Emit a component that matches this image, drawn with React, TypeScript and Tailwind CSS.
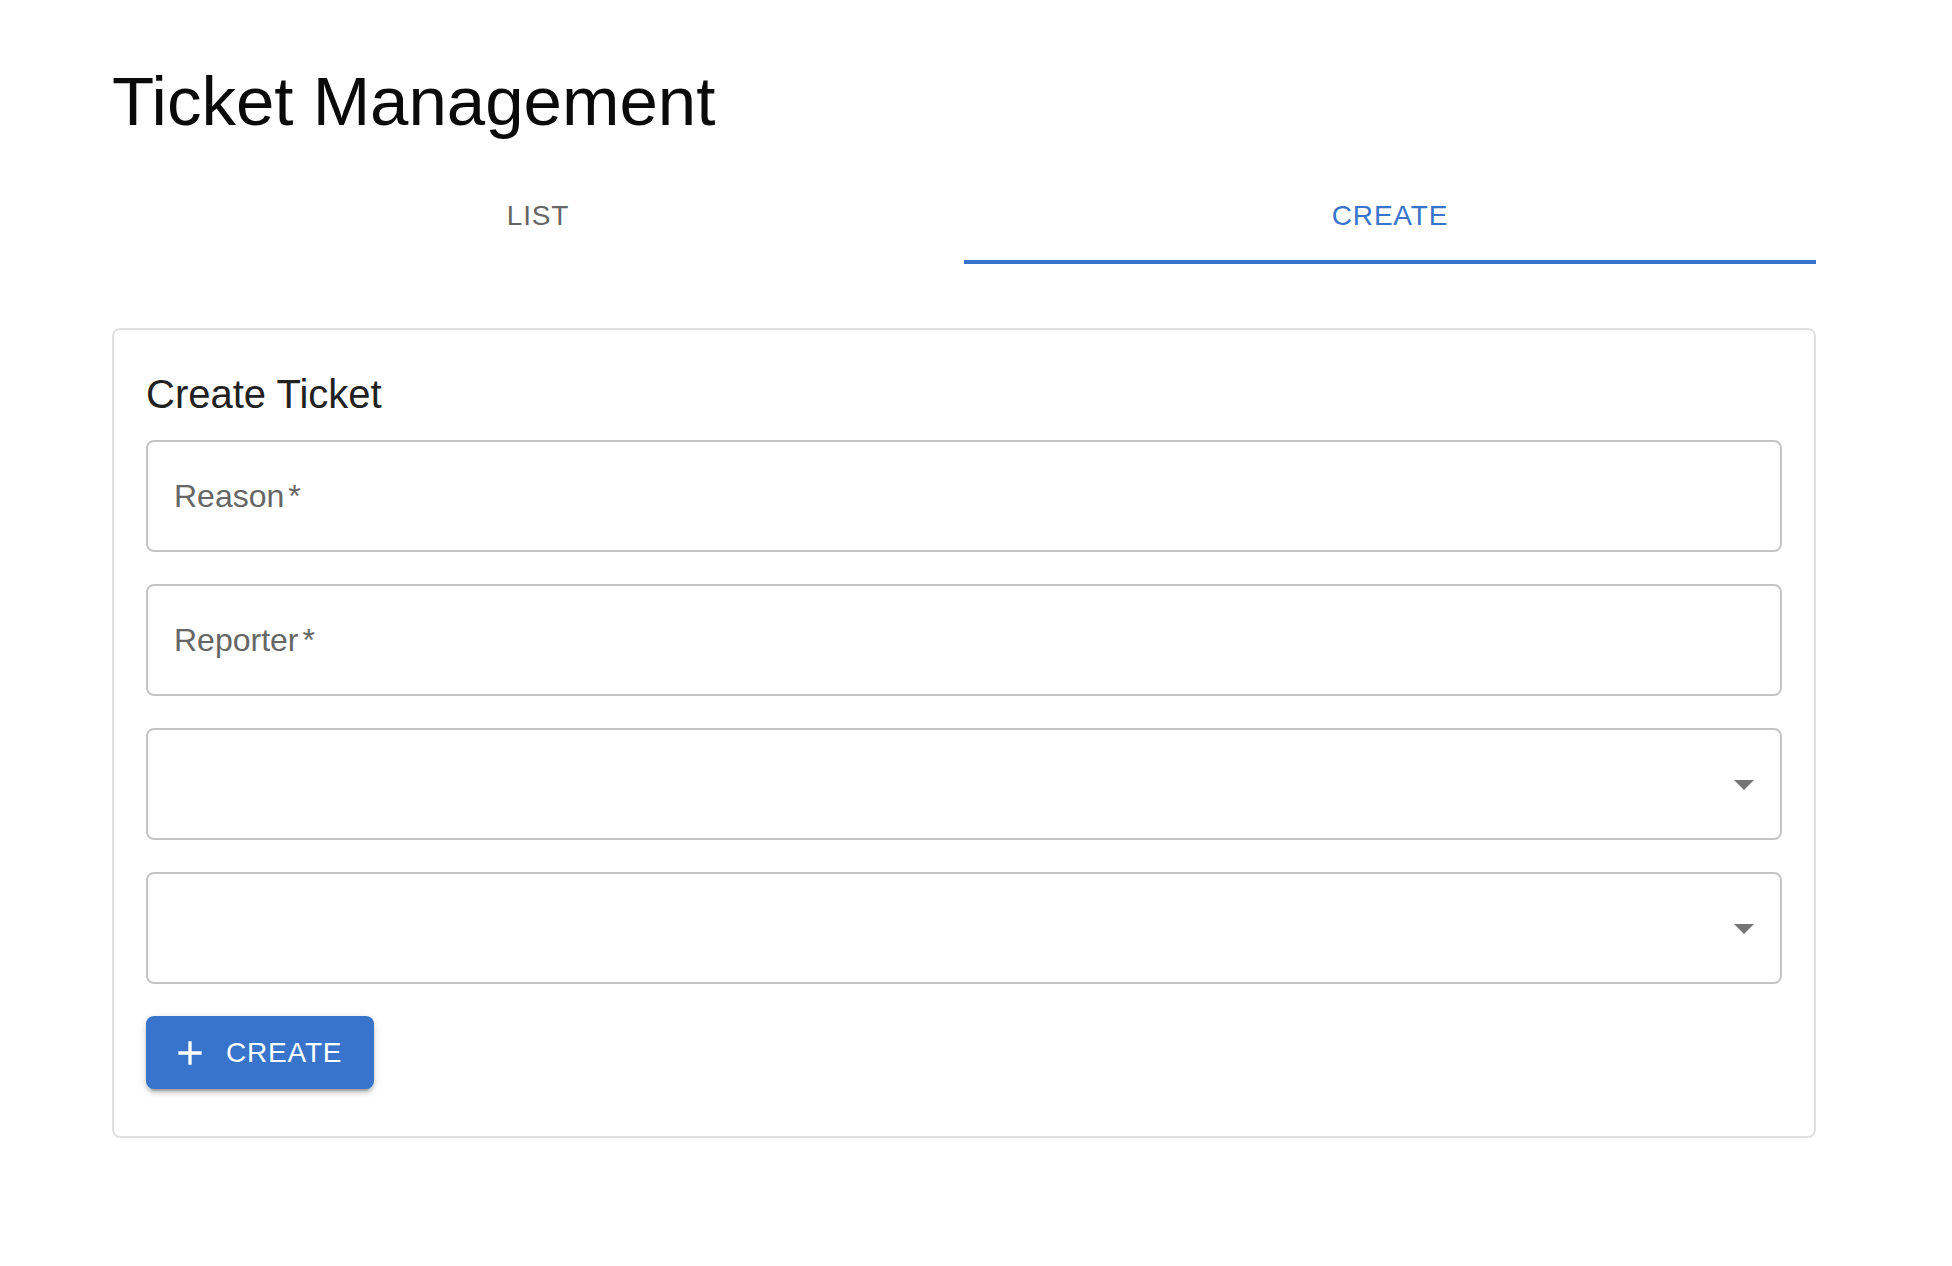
import { useState } from 'react';

const font = { fontFamily: '"Liberation Sans", Arial, Helvetica, sans-serif' };

function TextField({ label }: { label: string }) {
  return (
    <div className="h-[112px] w-full rounded-[8px] border-2 border-[#c4c4c4] flex items-center pl-[26px]">
      <span className="text-[32px] text-[#666666] leading-none">
        {label}
        <span className="ml-[4px]">*</span>
      </span>
    </div>
  );
}

function SelectField() {
  return (
    <div className="h-[112px] w-full rounded-[8px] border-2 border-[#c4c4c4] flex items-center justify-end pr-[12px]">
      <svg width="48" height="48" viewBox="0 0 24 24" className="fill-[#757575]">
        <path d="M7 10l5 5 5-5z" />
      </svg>
    </div>
  );
}

export default function App() {
  const [tab, setTab] = useState(1);
  const tabs = ['LIST', 'CREATE'];

  return (
    <div className="min-h-screen bg-white" style={font}>
      <div className="pl-[112px] pt-[60px] w-[1816px]">
        <h1 className="text-[69px] leading-[84px] text-[#0a0a0a] mb-[24px]">Ticket Management</h1>

        {/* Tabs */}
        <div className="flex">
          {tabs.map((t, i) => (
            <button
              key={t}
              onClick={() => setTab(i)}
              className={`flex-1 h-[96px] flex flex-col items-center justify-end ${
                tab === i ? 'text-[#3874cb]' : 'text-[#666666]'
              }`}
            >
              <span className="text-[28px] tracking-[0.8px] leading-none mb-[30px]">{t}</span>
              <span className={`h-[4px] w-full ${tab === i ? 'bg-[#3874cb]' : 'bg-transparent'}`} />
            </button>
          ))}
        </div>

        {/* Card */}
        <div className="mt-[64px] border-2 border-[#e0e0e0] rounded-[8px] px-[32px] pt-[32px] pb-[47px]">
          <h2 className="text-[40px] leading-[64px] text-[#212121] mb-[14px]">Create Ticket</h2>
          <div className="flex flex-col gap-[32px]">
            <TextField label="Reason" />
            <TextField label="Reporter" />
            <SelectField />
            <SelectField />
            <div>
              <button className="h-[73px] rounded-[8px] bg-[#3874cb] text-white flex items-center pl-[24px] pr-[32px] shadow-[0_6px_2px_-4px_rgba(0,0,0,0.2),0_4px_4px_0_rgba(0,0,0,0.14),0_2px_10px_0_rgba(0,0,0,0.12)]">
                <svg width="40" height="40" viewBox="0 0 24 24" className="fill-white mr-[16px]">
                  <path d="M19 13h-6v6h-2v-6H5v-2h6V5h2v6h6z" />
                </svg>
                <span className="text-[28px] tracking-[0.8px] leading-none">CREATE</span>
              </button>
            </div>
          </div>
        </div>
      </div>
    </div>
  );
}
